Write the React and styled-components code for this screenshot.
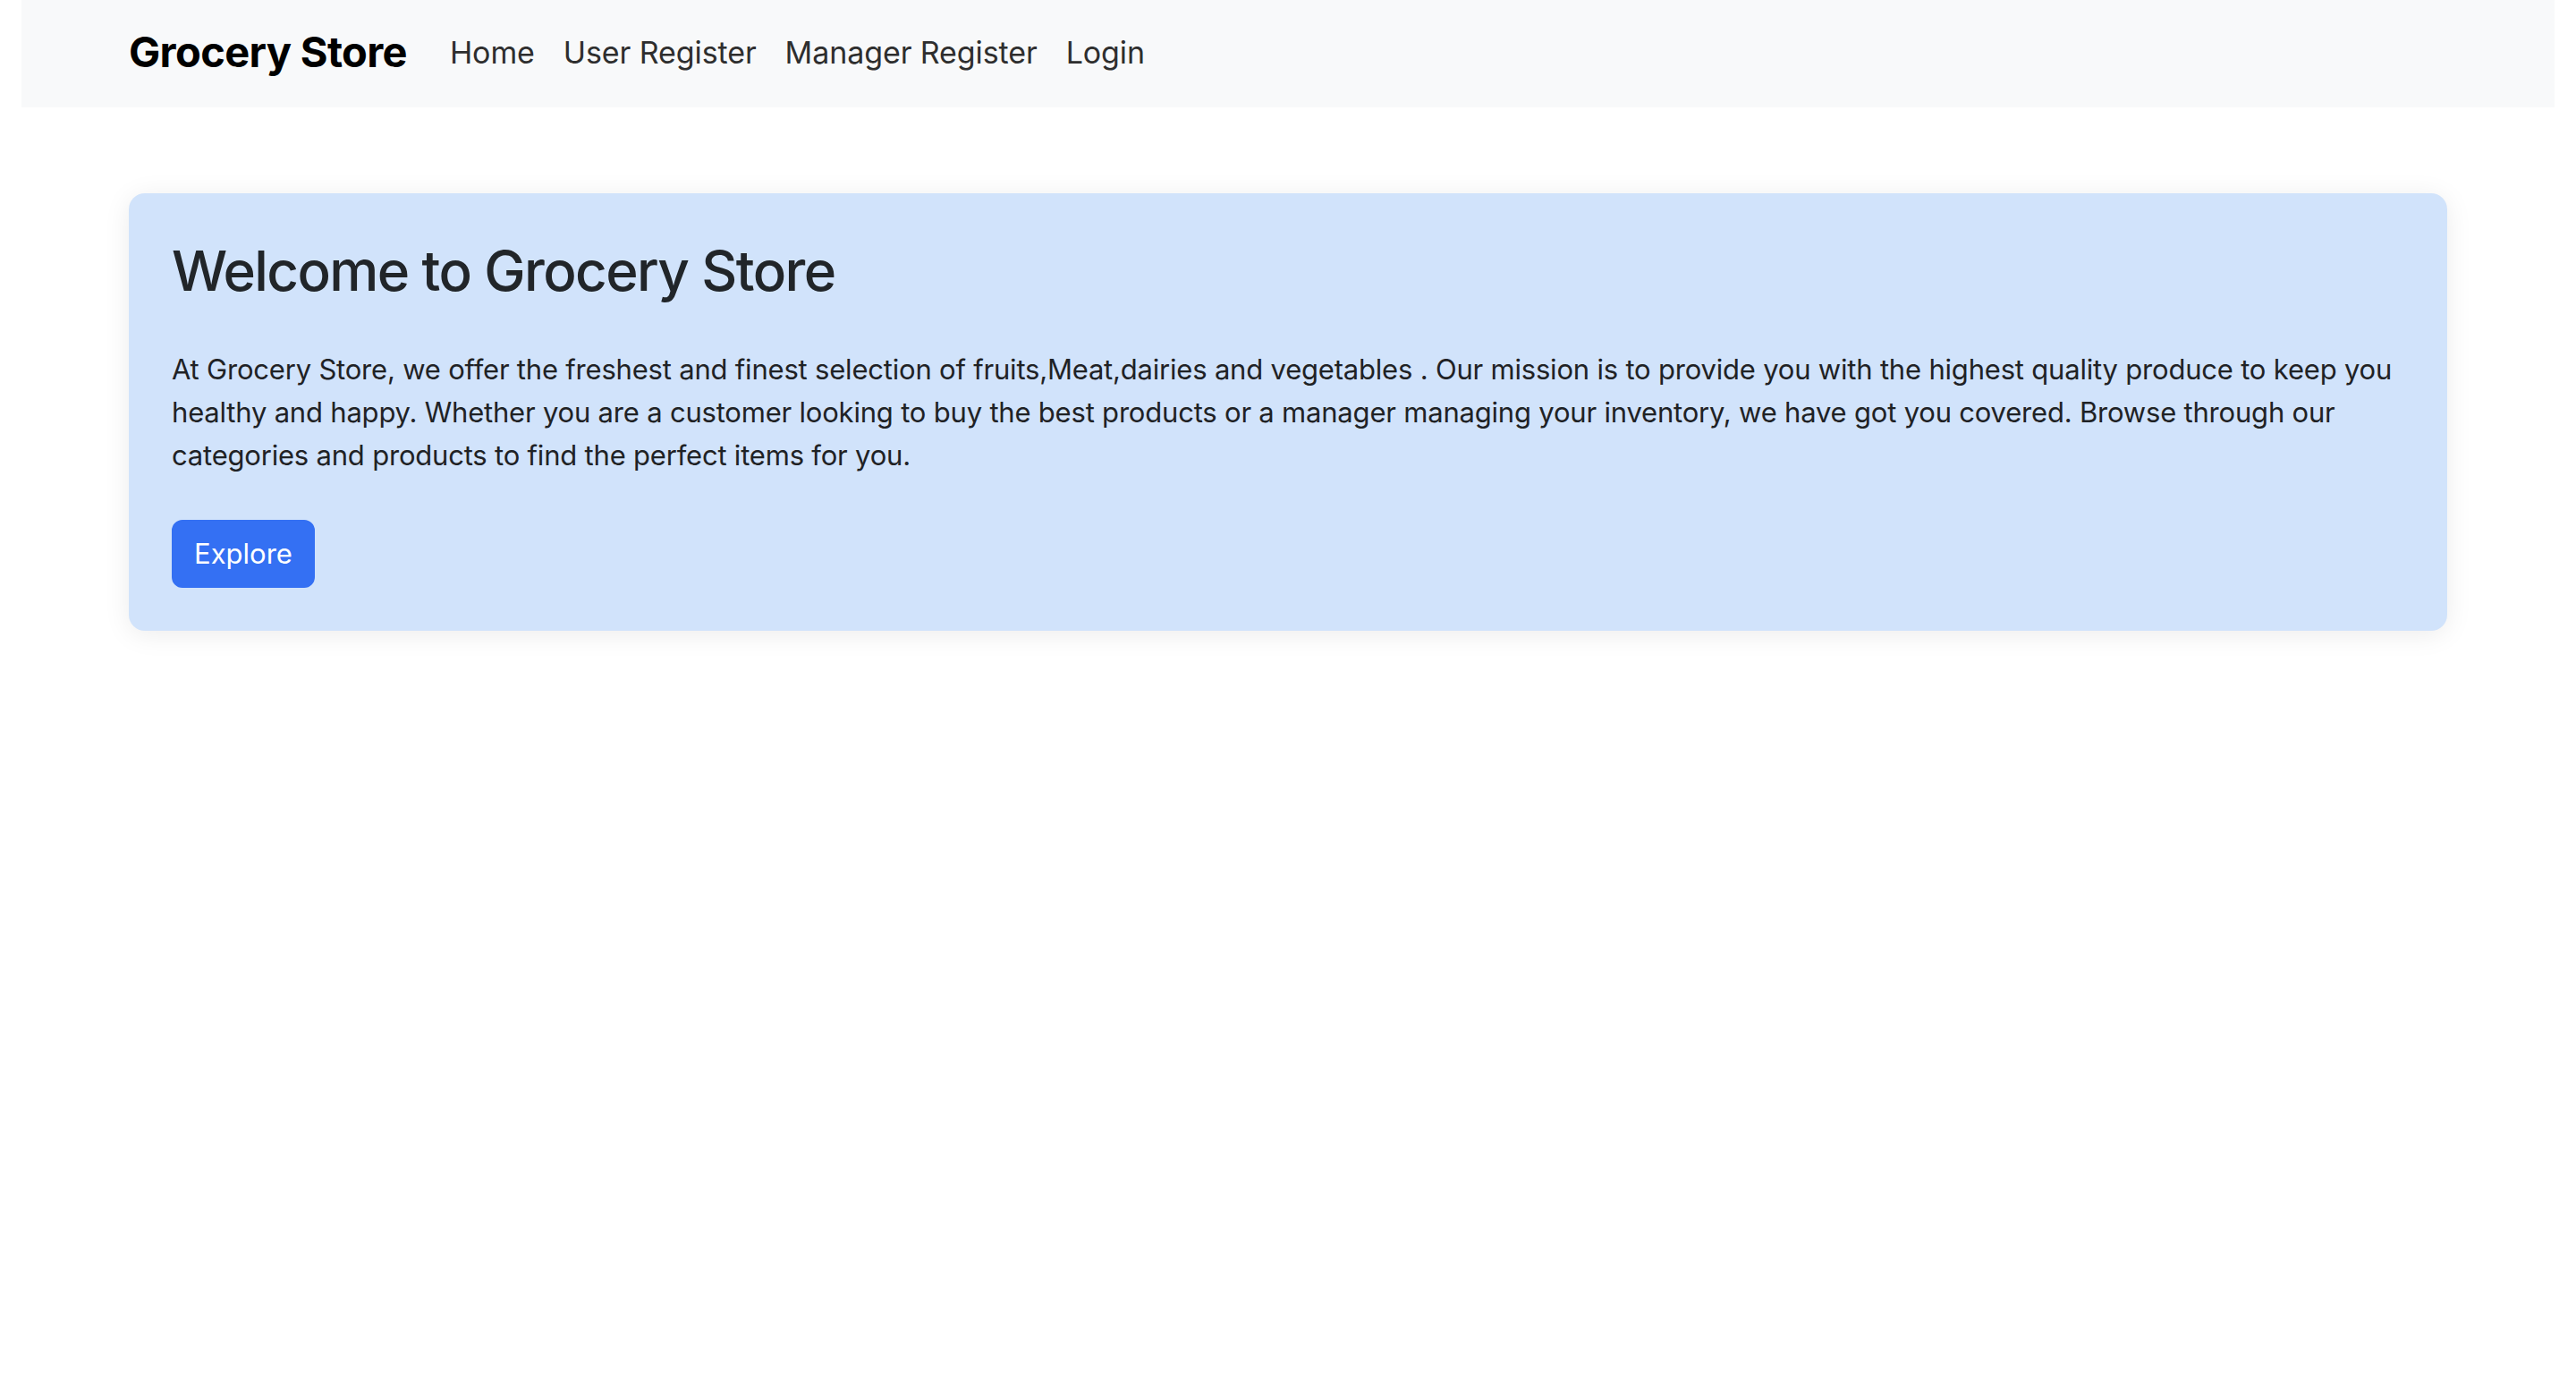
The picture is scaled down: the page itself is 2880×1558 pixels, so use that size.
import React from "react";
import styled, { createGlobalStyle } from "styled-components";

const GlobalStyle = createGlobalStyle`
  html, body {
    margin: 0;
    padding: 0;
    background: #fff;
  }
  body {
    font-family: Inter, "Noto Sans", "Liberation Sans", sans-serif;
    color: #212529;
    font-size: 32px;
    line-height: 1.5;
  }
  * { box-sizing: border-box; }
`;

const links = ["Home", "User Register", "Manager Register", "Login"];

export const App = () => {
  return (
    <Page>
      <GlobalStyle />
      <NavBar>
        <Container>
          <Brand href="#">Grocery Store</Brand>
          <NavList>
            {links.map((l) => (
              <NavItem key={l}>
                <NavLink href="#">{l}</NavLink>
              </NavItem>
            ))}
          </NavList>
        </Container>
      </NavBar>
      <Main>
        <Hero>
          <Title>Welcome to Grocery Store</Title>
          <Lead>
            At Grocery Store, we offer the freshest and finest selection of
            fruits,Meat,dairies and vegetables . Our mission is to provide you
            with the highest quality produce to keep you healthy and happy.
            Whether you are a customer looking to buy the best products or a
            manager managing your inventory, we have got you covered. Browse
            through our categories and products to find the perfect items for
            you.
          </Lead>
          <Button type="button">Explore</Button>
        </Hero>
      </Main>
    </Page>
  );
};

const Page = styled.div`
  padding: 0 24px;
  min-height: 100vh;
`;

const NavBar = styled.nav`
  background-color: #f8f9fa;
  height: 120px;
  display: flex;
  align-items: center;
  padding-bottom: 3px;
`;

const Container = styled.div`
  width: 100%;
  max-width: 2640px;
  margin: 0 auto;
  padding: 0 24px;
  display: flex;
  align-items: center;
`;

const Brand = styled.a`
  font-size: 47px;
  font-weight: 700;
  color: #000;
  text-decoration: none;
  letter-spacing: -0.65px;
  margin-right: 32px;
  line-height: 1.5;
`;

const NavList = styled.ul`
  display: flex;
  list-style: none;
  margin: 0;
  padding: 0;
`;

const NavItem = styled.li`
  display: block;
`;

const NavLink = styled.a`
  display: block;
  padding: 8px 16px;
  font-size: 34px;
  color: #2e2e2e;
  text-decoration: none;
  letter-spacing: -0.1px;
`;

const Main = styled.main`
  max-width: 2640px;
  margin: 96px auto 0;
  padding: 0 24px;
`;

const Hero = styled.section`
  background-color: #d1e3fb;
  border-radius: 18px;
  padding: 48px;
  box-shadow: 0 4px 30px rgba(0, 0, 0, 0.08);
`;

const Title = styled.h2`
  margin: 0 0 48px;
  font-size: 62px;
  font-weight: 500;
  line-height: 77px;
  color: #212529;
  letter-spacing: -1.6px;
`;

const Lead = styled.p`
  margin: 0 0 48px;
  font-size: 31px;
  line-height: 48px;
  color: #1f2225;
  letter-spacing: -0.2px;
`;

const Button = styled.button`
  font-family: inherit;
  font-size: 31px;
  line-height: 48px;
  padding: 12px 23px;
  border: 2px solid #3470f3;
  border-radius: 12px;
  background-color: #3470f3;
  color: #fff;
  cursor: pointer;
`;

export default App;
